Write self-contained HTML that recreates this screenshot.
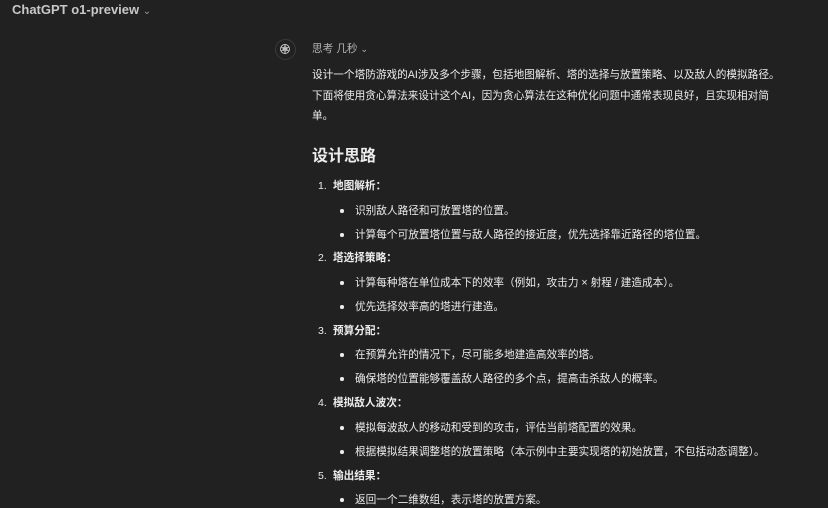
<!DOCTYPE html>
<html><head><meta charset="utf-8"><style>
html,body{margin:0;padding:0;background:#212121;width:828px;height:508px;overflow:hidden}
body{font-family:"Liberation Sans","Noto Sans CJK SC",sans-serif;color:#ececec;position:relative}
.l{position:absolute;white-space:nowrap;font-size:10.65px;line-height:14px}
.b{font-weight:bold}
.n{position:absolute;font-size:10.5px;line-height:14px}
.dot{position:absolute;width:3.5px;height:3.5px;border-radius:50%;background:#ececec}
</style></head><body>
<div class="l b" style="left:12px;top:2px;font-size:13px;line-height:16px;color:#c8c8c8">ChatGPT o1-preview <span style="font-weight:normal;color:#999;font-size:10px">&#8964;</span></div>
<div style="position:absolute;left:275px;top:39px;width:19px;height:19px;border:1px solid #3a3a3a;border-radius:50%"></div>
<svg style="position:absolute;left:279px;top:43px" width="12" height="12" viewBox="0 0 12 12" fill="none" stroke="#ccc" stroke-width="0.9"><circle cx="6" cy="6" r="4.5"/><circle cx="6" cy="6" r="2"/><path d="M6 1.5v4M2 4l4 2M2 8l4-2M10 4l-4 2M10 8l-4-2M6 10.5v-4"/></svg>
<div class="l" style="left:312px;top:42px;color:#b4b4b4">思考 几秒 <span style="font-size:9px">&#8964;</span></div>
<div class="l" style="left:312px;top:68px">设计一个塔防游戏的AI涉及多个步骤，包括地图解析、塔的选择与放置策略、以及敌人的模拟路径。</div>
<div class="l" style="left:312px;top:89px">下面将使用贪心算法来设计这个AI，因为贪心算法在这种优化问题中通常表现良好，且实现相对简</div>
<div class="l" style="left:312px;top:109px">单。</div>
<div class="l b" style="left:312px;top:147px;font-size:16px;line-height:20px">设计思路</div>

<div class="n" style="left:318px;top:179px">1.</div><div class="l b" style="left:333px;top:179px">地图解析：</div>
<div class="dot" style="left:340px;top:209px"></div><div class="l" style="left:355px;top:204px">识别敌人路径和可放置塔的位置。</div>
<div class="dot" style="left:340px;top:233px"></div><div class="l" style="left:355px;top:228px">计算每个可放置塔位置与敌人路径的接近度，优先选择靠近路径的塔位置。</div>

<div class="n" style="left:318px;top:251px">2.</div><div class="l b" style="left:333px;top:251px">塔选择策略：</div>
<div class="dot" style="left:340px;top:281px"></div><div class="l" style="left:355px;top:276px">计算每种塔在单位成本下的效率（例如，攻击力 × 射程 / 建造成本）。</div>
<div class="dot" style="left:340px;top:305px"></div><div class="l" style="left:355px;top:300px">优先选择效率高的塔进行建造。</div>

<div class="n" style="left:318px;top:324px">3.</div><div class="l b" style="left:333px;top:324px">预算分配：</div>
<div class="dot" style="left:340px;top:353px"></div><div class="l" style="left:355px;top:348px">在预算允许的情况下，尽可能多地建造高效率的塔。</div>
<div class="dot" style="left:340px;top:377px"></div><div class="l" style="left:355px;top:372px">确保塔的位置能够覆盖敌人路径的多个点，提高击杀敌人的概率。</div>

<div class="n" style="left:318px;top:396px">4.</div><div class="l b" style="left:333px;top:396px">模拟敌人波次：</div>
<div class="dot" style="left:340px;top:426px"></div><div class="l" style="left:355px;top:421px">模拟每波敌人的移动和受到的攻击，评估当前塔配置的效果。</div>
<div class="dot" style="left:340px;top:450px"></div><div class="l" style="left:355px;top:445px">根据模拟结果调整塔的放置策略（本示例中主要实现塔的初始放置，不包括动态调整）。</div>

<div class="n" style="left:318px;top:469px">5.</div><div class="l b" style="left:333px;top:469px">输出结果：</div>
<div class="dot" style="left:340px;top:498px"></div><div class="l" style="left:355px;top:493px">返回一个二维数组，表示塔的放置方案。</div>
</body></html>
